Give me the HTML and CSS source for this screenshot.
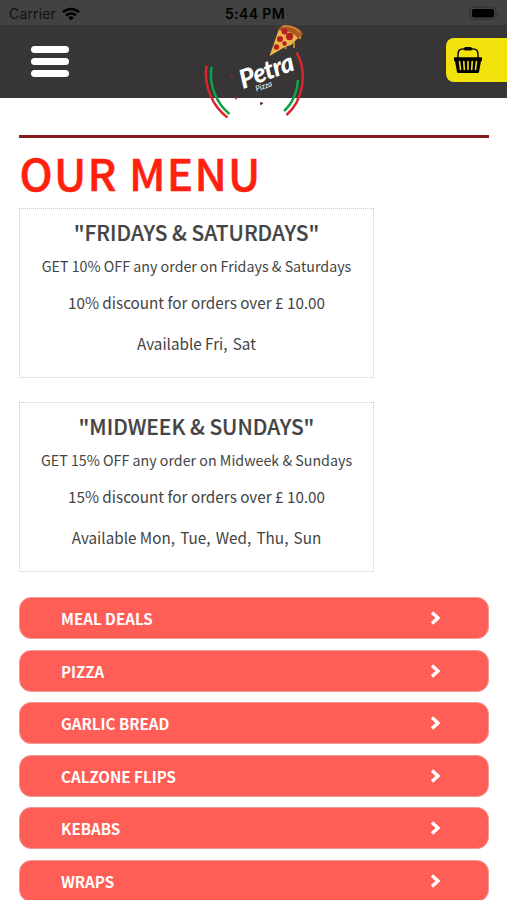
FILE: index.html
```html
<!DOCTYPE html>
<html lang="en">
<head>
  <meta charset="UTF-8">
  <meta name="viewport" content="width=device-width, initial-scale=1.0">
  <title>Petra Pizza</title>
  <link rel="stylesheet" href="styles.css">
</head>
<body>
  <div class="status-bar">
    <div class="carrier">
      <span>Carrier</span>
      <svg class="wifi" width="18" height="14" viewBox="0 0 18 14" fill="none" stroke="#000" stroke-width="2.5">
        <path d="M1 5.2a11.4 11.4 0 0 1 16 0M4 8.4a7.2 7.2 0 0 1 10 0"/>
        <path d="M9 13.5L6.2 10.6a4 4 0 0 1 5.6 0z" fill="#000" stroke="none"/>
      </svg>
    </div>
    <div class="time">5:44 PM</div>
    <svg class="battery" width="32" height="15" viewBox="0 0 32 15">
      <rect x="1" y="1" width="26" height="12.5" rx="4" fill="none" stroke="#303030" stroke-width="1"/>
      <rect x="3" y="3" width="22" height="8.5" rx="2" fill="#000"/>
      <path d="M28.5 5.5q2 1.7 0 3.5z" fill="#2b2b2b"/>
    </svg>
  </div>

  <header>
    <button class="menu-btn" aria-label="Menu"><span></span><span></span><span></span></button>
    <div class="logo">
      <svg width="104" height="100" viewBox="200 22 104 100" fill="none">
        <g stroke-width="2.5">
          <path d="M206.500 65.500C203.500 85 212 106 227.500 117.500" stroke="#d8262f"/>
          <path d="M211.500 67C208.500 84 216 103 229.500 114" stroke="#12a14b"/>
          <path d="M296.500 52.500C308 72 303 101 286.500 115" stroke="#d8262f"/>
          <path d="M298 80C297.500 92 292 104 284 111" stroke="#12a14b"/>
        </g>
        <!-- pizza slice -->
        <path d="M269.500 56L279 29q13-3 21 7l-9 9-6 2z" fill="#efb64c"/>
        <path d="M278 30q3-6 11-4.500 11 1.500 14 8.500l-4.500 5.500q-5-9-19.500-9z" fill="#a75b22"/>
        <path d="M282 26.500q11-2 18 6" stroke="#d58b3d" stroke-width="1.5"/>
        <path d="M285.500 45v4M294 41v7M300 36v3" stroke="#d99a36" stroke-width="1.6"/>
        <g fill="#b3201f">
          <circle cx="284.500" cy="31.500" r="3"/>
          <circle cx="280" cy="39" r="3"/>
          <circle cx="289.500" cy="36.500" r="3.700"/>
          <circle cx="276.500" cy="47" r="2.700"/>
          <circle cx="284.500" cy="43.500" r="2.200"/>
          <path d="M230 75l3 1-1 2zM234.500 97l3 .5-1.500 2.500z"/>
          <path d="M260 102l3.500 1-3 2.500z" fill="#58151b"/>
        </g>
      </svg>
      <span class="logo-name">Petra</span>
      <span class="logo-sub">Pizza</span>
    </div>
    <button class="basket-btn" aria-label="Basket">
      <svg width="28" height="27" viewBox="0 0 28 27">
        <path d="M4 11.500V7.500Q4 2 8.500 2h11Q24 2 24 7.500v4" fill="none" stroke="#111" stroke-width="1.5"/>
        <rect x="10" y="0" width="8" height="3.5" rx="1.5" fill="#000"/>
        <path d="M0 11.200q0-1 1-1h26q1 0 1 1v2q0 1-1 1l-2 10.800q-.2 1-1.200 1H4.200q-1 0-1.200-1L1 14.200q-1 0-1-1z" fill="#000"/>
        <path d="M5.500 14.500l1 8M9.800 14.500l.5 8M14 14.500v8M18.200 14.500l-.5 8M22.500 14.500l-1 8" stroke="#f0e010" stroke-width="1.6" stroke-linecap="round"/>
      </svg>
    </button>
  </header>

  <main>
    <h1>OUR MENU</h1>

    <section class="offer">
      <h2>"FRIDAYS &amp; SATURDAYS"</h2>
      <p class="offer-desc">GET 10% OFF any order on Fridays &amp; Saturdays</p>
      <p class="offer-rule">10% discount for orders over £ 10.00</p>
      <p class="offer-days">Available <span>Fri, Sat</span></p>
    </section>

    <section class="offer">
      <h2>"MIDWEEK &amp; SUNDAYS"</h2>
      <p class="offer-desc">GET 15% OFF any order on Midweek &amp; Sundays</p>
      <p class="offer-rule">15% discount for orders over £ 10.00</p>
      <p class="offer-days">Available <span>Mon, Tue, Wed, Thu, Sun</span></p>
    </section>

    <nav class="categories">
      <a class="category" href="#"><span>MEAL DEALS</span><svg class="arrow" viewBox="0 0 12 16"><path d="M3 2.500L9 8l-6 5.500"/></svg></a>
      <a class="category" href="#"><span>PIZZA</span><svg class="arrow" viewBox="0 0 12 16"><path d="M3 2.500L9 8l-6 5.500"/></svg></a>
      <a class="category" href="#"><span>GARLIC BREAD</span><svg class="arrow" viewBox="0 0 12 16"><path d="M3 2.500L9 8l-6 5.500"/></svg></a>
      <a class="category" href="#"><span>CALZONE FLIPS</span><svg class="arrow" viewBox="0 0 12 16"><path d="M3 2.500L9 8l-6 5.500"/></svg></a>
      <a class="category" href="#"><span>KEBABS</span><svg class="arrow" viewBox="0 0 12 16"><path d="M3 2.500L9 8l-6 5.500"/></svg></a>
      <a class="category" href="#"><span>WRAPS</span><svg class="arrow" viewBox="0 0 12 16"><path d="M3 2.500L9 8l-6 5.500"/></svg></a>
    </nav>
  </main>
</body>
</html>
```

FILE: styles.css
```css
* {
  box-sizing: border-box;
}

body {
  margin: 0;
  height: 900px;
  overflow: hidden;
  background-color: #fff;
  color: #444;
  font-family: "Noto Sans CJK SC", "Open Sans", sans-serif;
}

.status-bar {
  height: 25px;
  padding: 2px 6px 0 9px;
  background-color: #424242;
  color: #000;
  display: grid;
  grid-template-columns: 1fr auto 1fr;
  align-items: center;
  font-family: Inter, sans-serif;
  font-size: 14px;
}

.carrier {
  display: flex;
  align-items: center;
  gap: 6px;
  color: #111;
  letter-spacing: 0.15px;
}

.time {
  font-weight: 600;
  letter-spacing: 0.4px;
}

.battery {
  justify-self: end;
}

header {
  height: 73px;
  background-color: #373535;
  position: relative;
  display: flex;
  justify-content: space-between;
  align-items: flex-start;
}

button {
  border: 0;
  padding: 0;
  background: none;
}

.menu-btn {
  width: 38px;
  margin: 20.5px 0 0 31px;
  display: flex;
  flex-direction: column;
  gap: 5px;
}

.menu-btn span {
  height: 7px;
  border-radius: 4px;
  background-color: #fff;
}

/* the logo hangs over the bottom edge of the header */
.logo {
  position: absolute;
  left: 200px;
  top: -3px;
  width: 104px;
  height: 100px;
}

.logo-name,
.logo-sub {
  position: absolute;
  color: #fff;
  font-family: Lato, sans-serif;
  font-style: italic;
  line-height: 1;
  transform: rotate(-20deg);
}

.logo-name {
  left: 38px;
  top: 35px;
  font-size: 26px;
  font-weight: 900;
  letter-spacing: -0.8px;
}

.logo-sub {
  left: 55px;
  top: 60px;
  font-size: 8px;
}

.basket-btn {
  width: 61px;
  height: 44px;
  margin-top: 13px;
  padding-left: 8px;
  border-radius: 8px 0 0 8px;
  background-color: #f2e20c;
  display: flex;
  align-items: center;
}

main {
  margin: 37px 18px 0 19px;
  border-top: 3px solid #861a1c;
}

h1 {
  margin: 9px 0 11px 0.5px;
  height: 50px;
  line-height: 50px;
  color: #ff2010;
  font-size: 44px;
  font-weight: 500;
  letter-spacing: 1.3px;
  -webkit-text-stroke: 0.5px #ff2010;
  white-space: nowrap;
}

.offer {
  width: 355px;
  height: 170px;
  margin-bottom: 24.4px;
  border: 1px dotted #ccc;
  text-align: center;
  white-space: nowrap;
}

.offer h2 {
  margin: 7px 0 0;
  line-height: 32px;
  font-size: 20.9px;
  font-weight: 500;
  -webkit-text-stroke: 0.2px #444;
}

.offer p {
  margin: 0;
  line-height: 24px;
  font-size: 15.25px;
}

.offer .offer-desc {
  margin-top: 6px;
  font-size: 14.25px;
}

.offer .offer-rule {
  margin-top: 12px;
}

.offer .offer-days {
  margin-top: 17px;
}

.offer-days span {
  word-spacing: 1.8px;
}

.categories {
  padding-top: 0.3px;
  display: flex;
  flex-direction: column;
  gap: 10.5px;
}

.category {
  height: 42px;
  padding: 0 47px 0 41px;
  border: 1px solid #f09a94;
  border-radius: 12px;
  background-color: #ff5e56;
  color: #fff;
  display: flex;
  align-items: center;
  justify-content: space-between;
  font-size: 15.15px;
  font-weight: 700;
  text-decoration: none;
}

.arrow {
  width: 12px;
  height: 16px;
  fill: none;
  stroke: #fff;
  stroke-width: 3.4;
}
```
